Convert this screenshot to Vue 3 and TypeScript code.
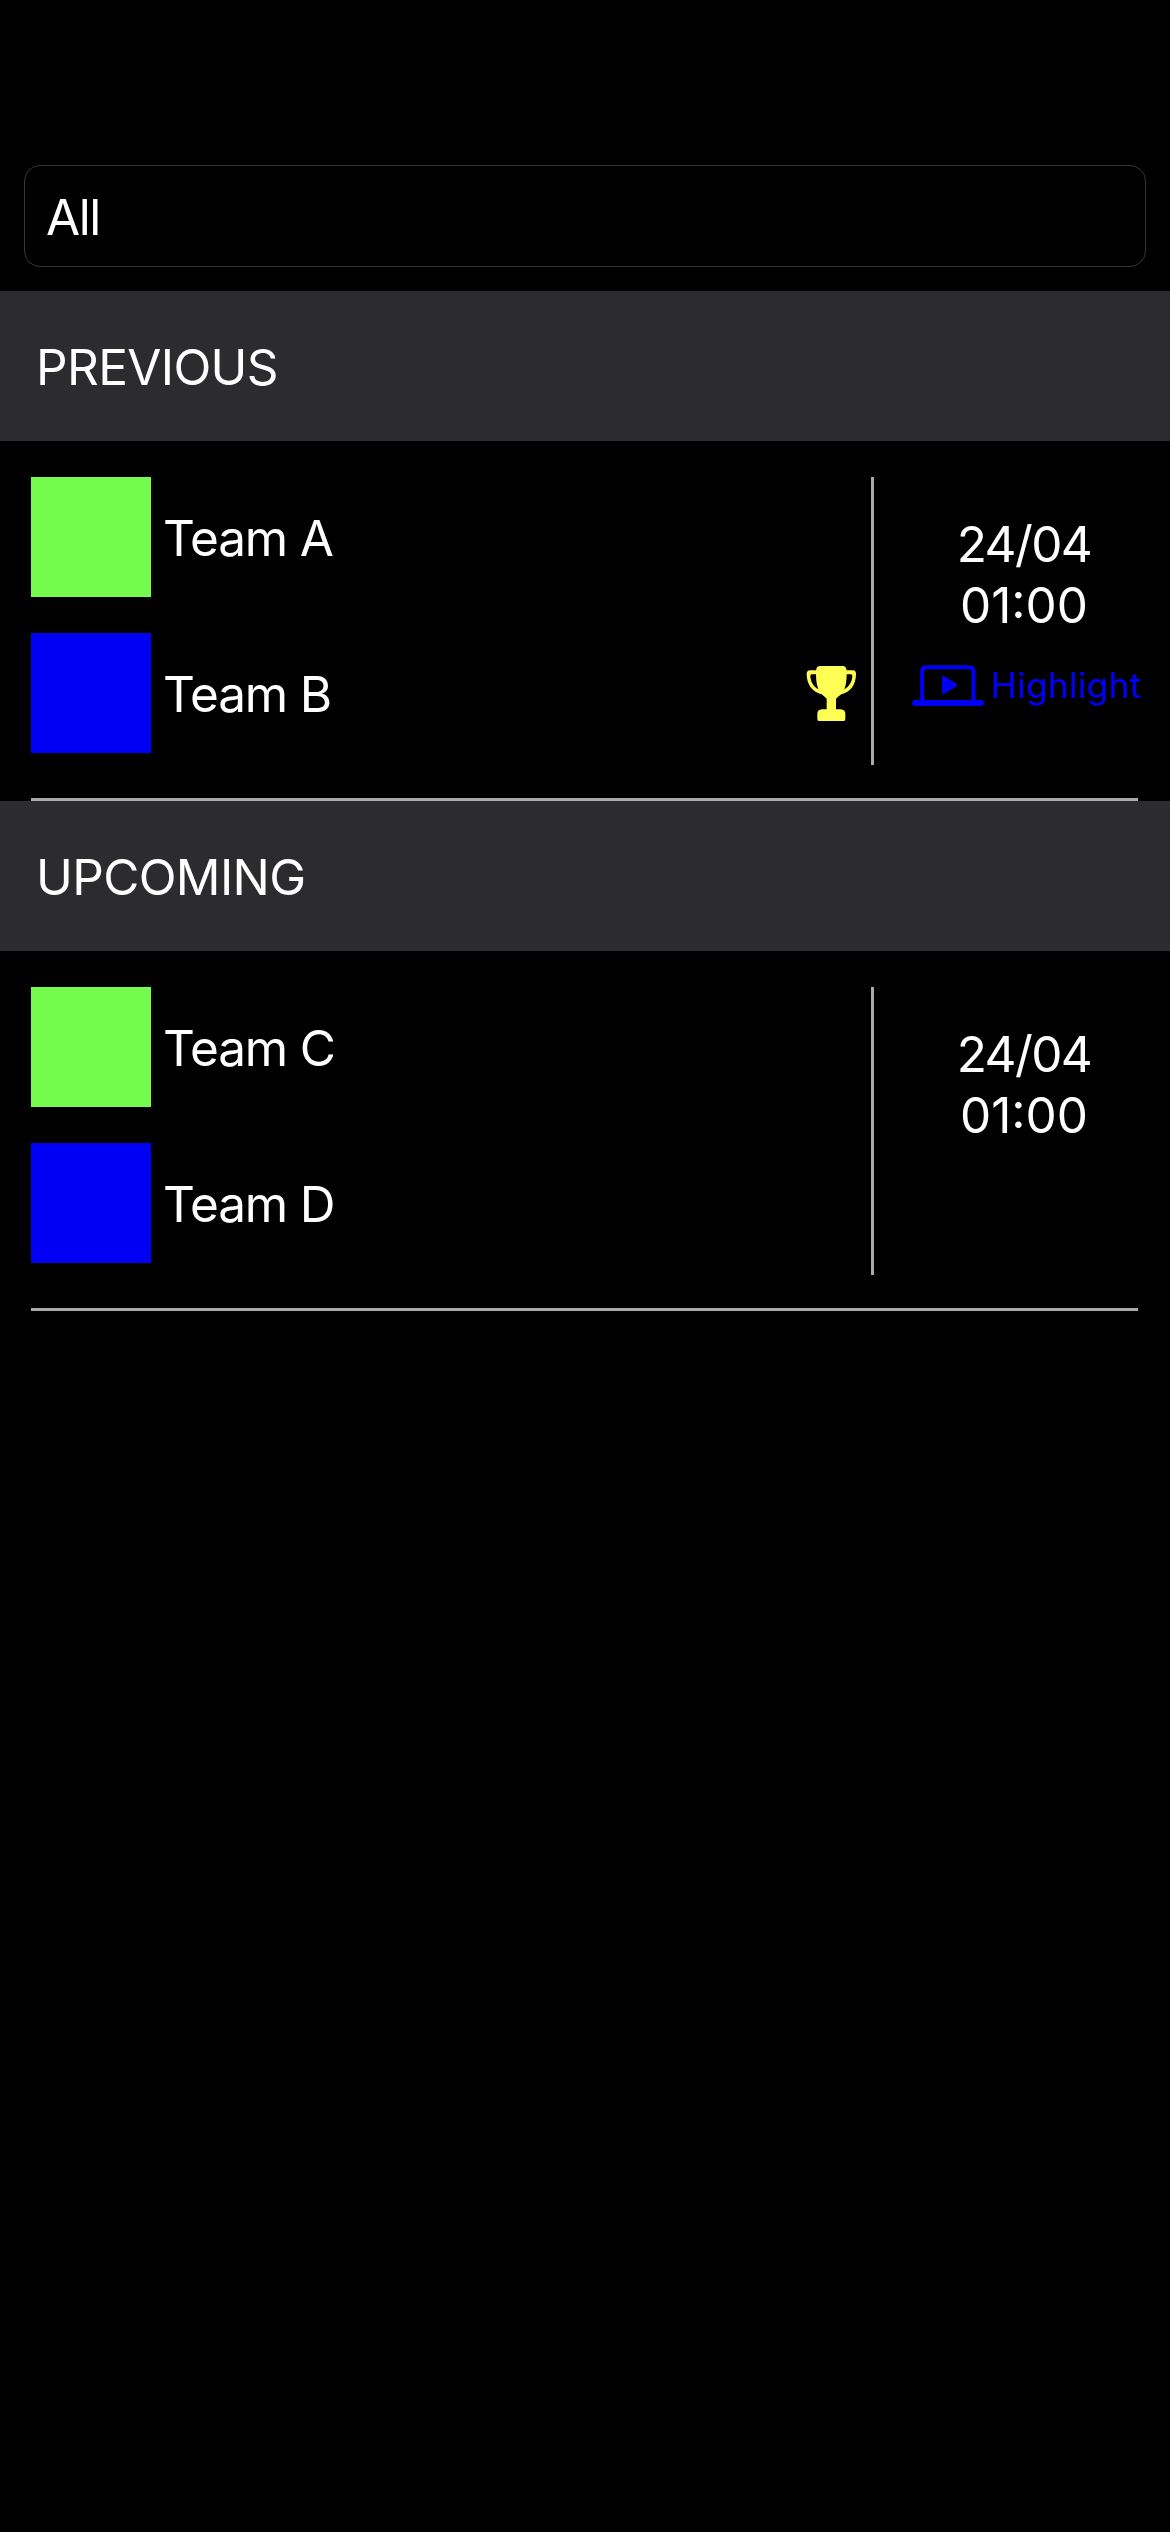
<script setup lang="ts">
interface Team {
  name: string
  color: string
  winner?: boolean
}

interface Match {
  teams: Team[]
  date: string
  time: string
  highlight?: boolean
}

interface Section {
  title: string
  matches: Match[]
}

const filter = 'All'

const sections: Section[] = [
  {
    title: 'PREVIOUS',
    matches: [
      {
        teams: [
          { name: 'Team A', color: '#75fb4c' },
          { name: 'Team B', color: '#0000f5', winner: true },
        ],
        date: '24/04',
        time: '01:00',
        highlight: true,
      },
    ],
  },
  {
    title: 'UPCOMING',
    matches: [
      {
        teams: [
          { name: 'Team C', color: '#75fb4c' },
          { name: 'Team D', color: '#0000f5' },
        ],
        date: '24/04',
        time: '01:00',
      },
    ],
  },
]
</script>

<template>
  <main class="screen">
    <div class="filter">{{ filter }}</div>
    <section v-for="section in sections" :key="section.title">
      <h2 class="section-title">{{ section.title }}</h2>
      <article v-for="(match, i) in section.matches" :key="i" class="match">
        <div class="row">
          <div class="teams">
            <div v-for="team in match.teams" :key="team.name" class="team">
              <span class="badge" :style="{ background: team.color }"></span>
              <span class="name">{{ team.name }}</span>
              <svg v-if="team.winner" class="trophy" viewBox="78 75 153 171">
                <path
                  fill="currentColor"
                  d="M120 78H189Q198 78 200 91H219Q228 92 228 102C228 134 211 157 184 163Q176 168 168 176V208H182Q196 209 196 222V237Q196 243 191 243H117Q112 243 112 237V222Q112 209 126 208H140V176Q132 168 125 163C98 157 80 134 80 102Q80 92 90 91H108Q110 78 120 78Z"
                />
                <path class="hole" d="M108 103H95Q91 103 91 108C92 126 101 140 115 148Q108 130 108 103ZM200 103H213Q217 103 217 108C216 126 207 140 193 148Q200 130 200 103Z" />
              </svg>
            </div>
          </div>
          <div class="info">
            <div class="when date">{{ match.date }}</div>
            <div class="when">{{ match.time }}</div>
            <div v-if="match.highlight" class="highlight">
              <svg class="laptop" viewBox="390 72 222 129">
                <path
                  d="M423.500 184V94Q423.500 81.500 436 81.500H565Q577.500 81.500 577.500 94V184"
                  fill="none"
                  stroke="currentColor"
                  stroke-width="12"
                />
                <rect x="393" y="180" width="216" height="18" rx="9" fill="currentColor" />
                <path fill="currentColor" d="M483 111Q483 105 489 108L527 131Q531 135 527 139L489 162Q483 165 483 159Z" />
              </svg>
              <span class="highlight-label">Highlight</span>
            </div>
          </div>
        </div>
      </article>
    </section>
  </main>
</template>

<style>
body {
  margin: 0;
  background: #000;
}
</style>

<style scoped>
.screen {
  box-sizing: border-box;
  min-height: 2532px;
  padding-top: 165px;
  background: #000;
  color: #fff;
  font-family: Inter, 'Liberation Sans', sans-serif;
  font-size: 49.5px;
  line-height: 61px;
}

.filter {
  box-sizing: border-box;
  height: 102px;
  margin: 0 24px 24px;
  padding: 21px 21px 0;
  border: 1px solid #363638;
  border-radius: 16px;
  letter-spacing: -1.4px;
}

.section-title {
  box-sizing: border-box;
  height: 150px;
  margin: 0;
  padding: 46px 36px 0;
  background: #2c2c2e;
  font-size: inherit;
  font-weight: 400;
  letter-spacing: -0.65px;
}

.match {
  box-sizing: border-box;
  height: 360px;
  margin: 0 32px 0 31px;
  padding-top: 36px;
  border-bottom: 3px solid #aaa;
}

.row {
  display: flex;
  height: 288px;
}

.teams {
  display: flex;
  flex-direction: column;
  gap: 36px;
  width: 840px;
}

.team {
  display: flex;
  align-items: center;
  height: 120px;
}

.badge {
  width: 120px;
  height: 120px;
}

.name {
  flex: 1;
  margin-left: 12px;
  padding-top: 2px;
  letter-spacing: -1.15px;
}

.trophy {
  width: 51px;
  height: 57px;
  margin-right: 14px;
  color: #fffe54;
}

.hole {
  fill: #000;
}

.info {
  display: flex;
  flex-direction: column;
  align-items: center;
  width: 300px;
  margin-right: -36px;
  padding-top: 37px;
  border-left: 3px solid #aaa;
}

.when {
  height: 61px;
}

.date {
  letter-spacing: -1.6px;
}

.highlight {
  display: flex;
  align-items: center;
  height: 44px;
  margin-top: 27px;
  padding-left: 5px;
  color: #0000f5;
  white-space: nowrap;
}

.laptop {
  width: 74px;
  height: 43px;
}

.highlight-label {
  margin-left: 6px;
  font-size: 35px;
  letter-spacing: 0.4px;
}
</style>
